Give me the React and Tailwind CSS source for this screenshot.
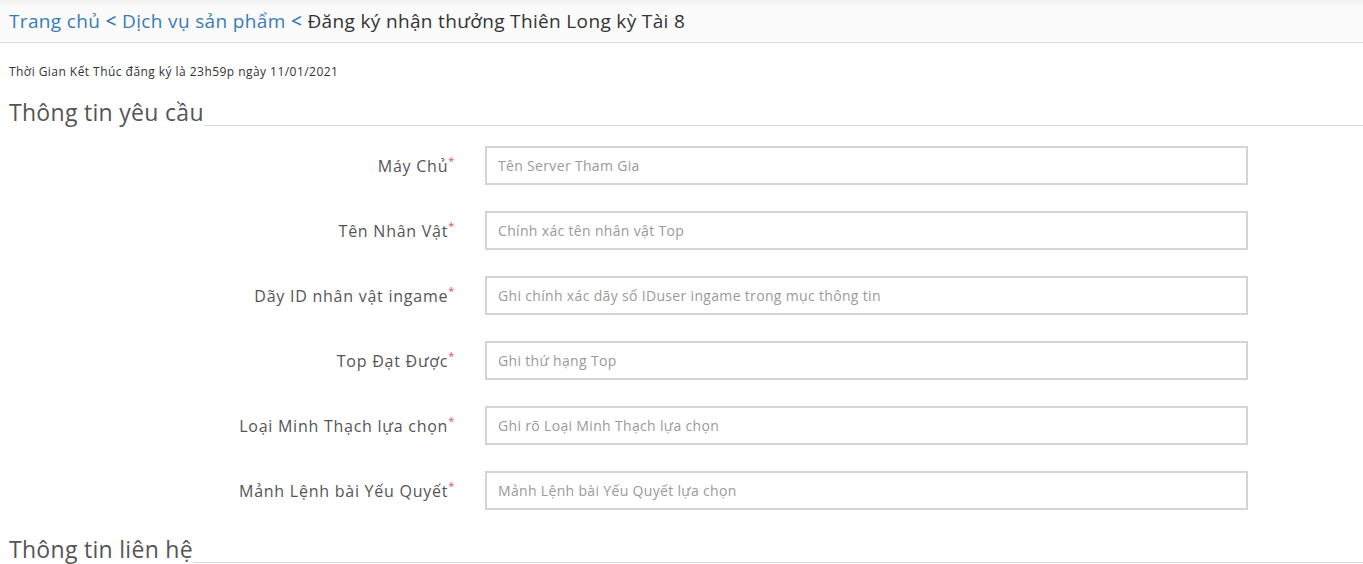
const fields = [
  { label: 'Máy Chủ', placeholder: 'Tên Server Tham Gia' },
  { label: 'Tên Nhân Vật', placeholder: 'Chính xác tên nhân vật Top' },
  { label: 'Dãy ID nhân vật ingame', placeholder: 'Ghi chính xác dãy số IDuser ingame trong mục thông tin' },
  { label: 'Top Đạt Được', placeholder: 'Ghi thứ hạng Top' },
  { label: 'Loại Minh Thạch lựa chọn', placeholder: 'Ghi rõ Loại Minh Thạch lựa chọn' },
  { label: 'Mảnh Lệnh bài Yếu Quyết', placeholder: 'Mảnh Lệnh bài Yếu Quyết lựa chọn' },
]

const SectionTitle = ({ children }) => (
  <div className="flex items-end">
    <h3 className="text-[23px] leading-[30px] tracking-[0.3px] text-[#555] font-normal whitespace-nowrap">{children}</h3>
    <div className="flex-1 border-b border-[#d9d9d9] mb-[1px]" />
  </div>
)

const App = () => {
  return (
    <div className="min-h-screen bg-white overflow-hidden" style={{ fontFamily: '"Open Sans", "Noto Sans", sans-serif' }}>
      <div className="h-[43px] border-b border-[#dddddd] bg-gradient-to-b from-[#f3f3f3] to-[#fbfbfb] to-[20%] flex items-center px-[9px]">
        <p className="text-[19px] tracking-[0.35px] whitespace-nowrap">
          <a href="#" className="text-[#3a7ab8]">Trang chủ</a>
          <span className="text-[#3a7ab8] font-semibold"> &lt; </span>
          <a href="#" className="text-[#3a7ab8]">Dịch vụ sản phẩm</a>
          <span className="text-[#3a7ab8] font-semibold"> &lt; </span>
          <span className="text-[#333]">Đăng ký nhận thưởng Thiên Long kỳ Tài 8</span>
        </p>
      </div>

      <div className="pl-[9px]">
        <p className="mt-[20px] text-[12px] leading-[17px] tracking-[0.45px] text-[#333]">Thời Gian Kết Thúc đăng ký là 23h59p ngày 11/01/2021</p>
        <div className="mt-[17px]">
          <SectionTitle>Thông tin yêu cầu</SectionTitle>
        </div>

        <form className="mt-[19px] flex flex-col gap-[26px]">
          {fields.map((f) => (
            <div key={f.label} className="flex items-center">
              <label className="w-[446px] text-right text-[16px] tracking-[0.75px] text-[#555]">
                {f.label}
                <span className="text-[#e05555] text-[11px] align-top relative top-[-1px]">*</span>
              </label>
              <input
                type="text"
                placeholder={f.placeholder}
                className="ml-[30px] w-[763px] h-[39px] border-2 border-[#d4d4d4] px-[11px] text-[14px] tracking-[0.33px] text-[#555] placeholder:text-[#9a9a9a] outline-none"
              />
            </div>
          ))}
        </form>

        <div className="mt-[24px]">
          <SectionTitle>Thông tin liên hệ</SectionTitle>
        </div>
      </div>
    </div>
  )
}

export default App
